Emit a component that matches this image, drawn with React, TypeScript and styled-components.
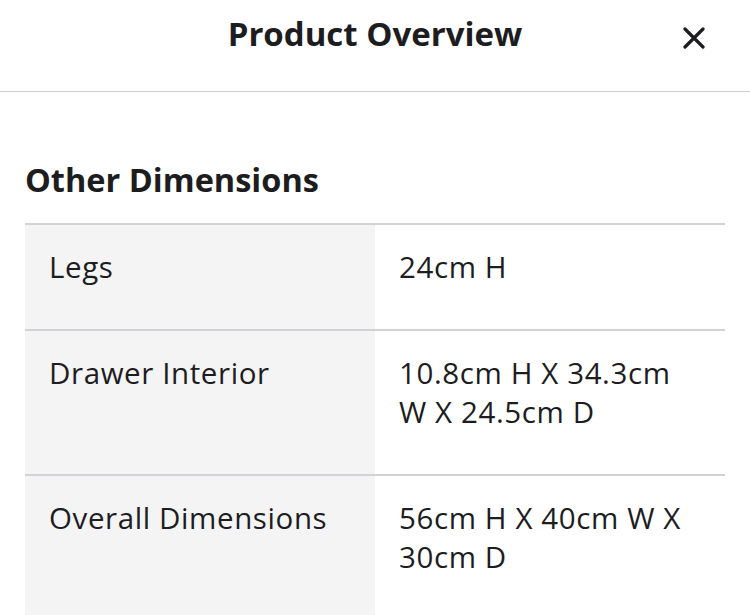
import React, { FC } from "react";
import styled, { createGlobalStyle } from "styled-components";

const GlobalStyle = createGlobalStyle`
  body {
    margin: 0;
    background: #ffffff;
    font-family: "Open Sans", "Noto Sans", sans-serif;
    color: #1d1d1f;
  }
`;

const Header = styled.header`
  position: relative;
  height: 92px;
  display: flex;
  align-items: flex-start;
  justify-content: center;
  padding-top: 14px;
  border-bottom: 1px solid #cfcfd2;
  box-sizing: border-box;
`;

const Title = styled.h1`
  margin: 0;
  font-size: 33px;
  font-weight: 700;
  line-height: 40px;
`;

const CloseButton = styled.button`
  position: absolute;
  right: 44px;
  top: 26px;
  width: 24px;
  height: 24px;
  padding: 0;
  border: none;
  background: none;
  display: flex;
  align-items: center;
  justify-content: center;
  cursor: pointer;
`;

const Body = styled.main`
  padding: 68px 25px 0;
`;

const SectionTitle = styled.h2`
  margin: 0 0 23px;
  font-size: 32.5px;
  font-weight: 700;
  line-height: 40px;
`;

const Table = styled.div`
  border-top: 2px solid #d2d2d6;
`;

const Row = styled.div`
  display: grid;
  grid-template-columns: 350px 1fr;
  border-bottom: 2px solid #d2d2d6;
`;

const Cell = styled.div<{ $label?: boolean }>`
  padding: 22px 24px 43px;
  font-size: 29.5px;
  line-height: 39px;
  letter-spacing: 0.6px;
  background: ${(p) => (p.$label ? "#f4f4f5" : "#ffffff")};
`;

const rows = [
  { label: "Legs", value: "24cm H" },
  { label: "Drawer Interior", value: "10.8cm H X 34.3cm W X 24.5cm D" },
  { label: "Overall Dimensions", value: "56cm H X 40cm W X 30cm D" },
];

const App: FC = () => {
  return (
    <>
      <GlobalStyle />
      <Header>
        <Title>Product Overview</Title>
        <CloseButton aria-label="Close">
          <svg width="22" height="22" viewBox="0 0 22 22">
            <path
              d="M2 2 L20 20 M20 2 L2 20"
              stroke="#1d1d1f"
              strokeWidth="3.2"
              strokeLinecap="round"
            />
          </svg>
        </CloseButton>
      </Header>
      <Body>
        <SectionTitle>Other Dimensions</SectionTitle>
        <Table>
          {rows.map((r) => (
            <Row key={r.label}>
              <Cell $label>{r.label}</Cell>
              <Cell>{r.value}</Cell>
            </Row>
          ))}
        </Table>
      </Body>
    </>
  );
};

export default App;
